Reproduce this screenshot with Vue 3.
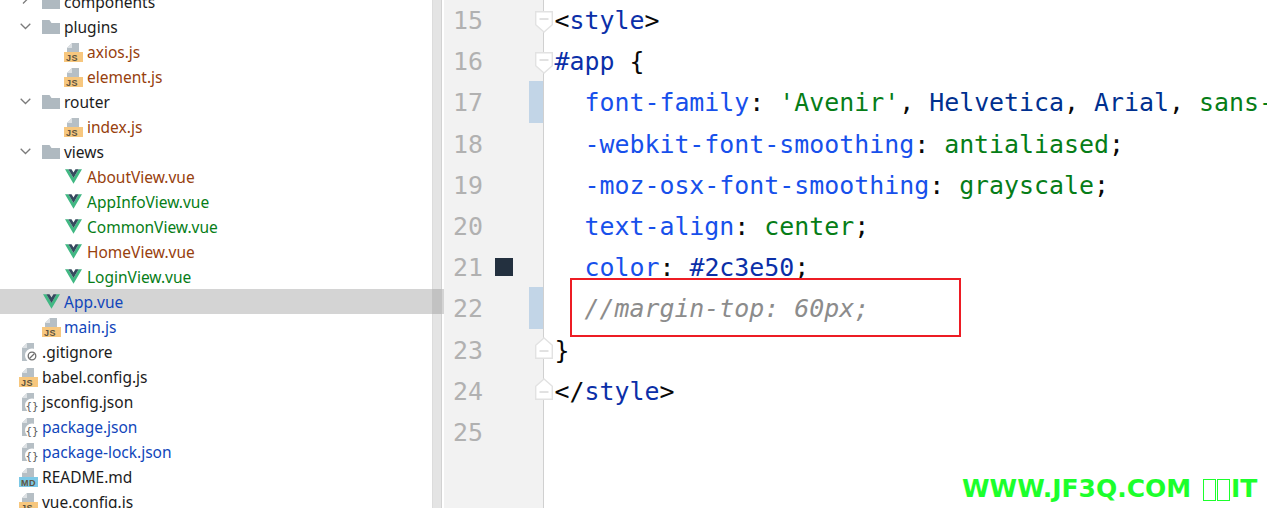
<script setup>
const rows = [
  { name: 'components', depth: 1, icon: 'folder', chevron: 'right', tone: 'plain' },
  { name: 'plugins', depth: 1, icon: 'folder', chevron: 'down', tone: 'plain' },
  { name: 'axios.js', depth: 2, icon: 'js', tone: 'brown' },
  { name: 'element.js', depth: 2, icon: 'js', tone: 'brown' },
  { name: 'router', depth: 1, icon: 'folder', chevron: 'down', tone: 'plain' },
  { name: 'index.js', depth: 2, icon: 'js', tone: 'brown' },
  { name: 'views', depth: 1, icon: 'folder', chevron: 'down', tone: 'plain' },
  { name: 'AboutView.vue', depth: 2, icon: 'vue', tone: 'brown' },
  { name: 'AppInfoView.vue', depth: 2, icon: 'vue', tone: 'green' },
  { name: 'CommonView.vue', depth: 2, icon: 'vue', tone: 'green' },
  { name: 'HomeView.vue', depth: 2, icon: 'vue', tone: 'brown' },
  { name: 'LoginView.vue', depth: 2, icon: 'vue', tone: 'green' },
  { name: 'App.vue', depth: 1, icon: 'vue', tone: 'blue', selected: true },
  { name: 'main.js', depth: 1, icon: 'js', tone: 'blue' },
  { name: '.gitignore', depth: 0, icon: 'ignore', tone: 'plain' },
  { name: 'babel.config.js', depth: 0, icon: 'js', tone: 'plain' },
  { name: 'jsconfig.json', depth: 0, icon: 'json', tone: 'plain' },
  { name: 'package.json', depth: 0, icon: 'json', tone: 'blue' },
  { name: 'package-lock.json', depth: 0, icon: 'json', tone: 'blue' },
  { name: 'README.md', depth: 0, icon: 'md', tone: 'plain' },
  { name: 'vue.config.js', depth: 0, icon: 'js', tone: 'plain' },
]

const lines = [
  { n: 15, fold: 'open', parts: [['p', '<'], ['t', 'style'], ['p', '>']] },
  { n: 16, fold: 'open', parts: [['t', '#app'], ['p', ' {']] },
  { n: 17, changed: true, parts: [['k', '  font-family'], ['p', ': '], ['v', "'Avenir'"], ['p', ', '], ['d', 'Helvetica'], ['p', ', '], ['d', 'Arial'], ['p', ', '], ['v', 'sans-serif'], ['p', ';']] },
  { n: 18, parts: [['k', '  -webkit-font-smoothing'], ['p', ': '], ['v', 'antialiased'], ['p', ';']] },
  { n: 19, parts: [['k', '  -moz-osx-font-smoothing'], ['p', ': '], ['v', 'grayscale'], ['p', ';']] },
  { n: 20, parts: [['k', '  text-align'], ['p', ': '], ['v', 'center'], ['p', ';']] },
  { n: 21, swatch: true, parts: [['k', '  color'], ['p', ': '], ['t', '#2c3e50'], ['p', ';']] },
  { n: 22, changed: true, parts: [['c', '  //margin-top: 60px;']] },
  { n: 23, fold: 'close', parts: [['p', '}']] },
  { n: 24, fold: 'close', parts: [['p', '</'], ['t', 'style'], ['p', '>']] },
  { n: 25, parts: [] },
]
</script>

<template>
  <div class="screen">
    <aside class="tree">
      <div class="tree-rows">
        <div
          v-for="row in rows"
          :key="row.name"
          class="row"
          :class="['depth-' + row.depth, { selected: row.selected }]"
        >
          <svg v-if="row.chevron === 'down'" class="chevron" viewBox="0 0 11 7">
            <path d="M.7.7 5.500 5.500 10.300.7" />
          </svg>
          <svg v-else-if="row.chevron === 'right'" class="chevron" viewBox="0 0 11 7">
            <path d="M3-1.500 6.500 2 3 5.500" />
          </svg>

          <span class="icon">
            <svg v-if="row.icon === 'folder'" width="18" height="14" viewBox="0 0 18 14">
              <path d="M0 0h7.500l2 3H18v11H0z" fill="#afb9c0" />
            </svg>
            <svg v-else-if="row.icon === 'vue'" class="vue" width="17" height="15" viewBox="0 0 256 221">
              <path d="M0 0l128 220.800L256 0h-51.200L128 132.480 50.560 0H0z" fill="#41b883" />
              <path d="M50.560 0L128 133.120 204.800 0h-47.360L128 51.200 97.920 0H50.560z" fill="#35495e" />
            </svg>
            <svg v-else-if="row.icon === 'js' || row.icon === 'md'" class="file" width="19" height="19" viewBox="0 0 19 19">
              <path d="M3 0h12v9H3z" fill="#b6bfc5" />
              <path d="M3 0v5l5-5z" fill="#fff" />
              <path d="M3 5 8 0v5z" fill="#dde1e4" />
              <rect y="9" width="19" height="10" :fill="row.icon === 'js' ? '#f7c77e' : '#7cc8e6'" />
              <text x="2" y="17.500" class="badge">{{ row.icon === 'js' ? 'JS' : 'MD' }}</text>
            </svg>
            <svg v-else class="file" width="19" height="19" viewBox="0 0 19 19">
              <path d="M3 0h12v18H3z" fill="#b6bfc5" />
              <path d="M3 0v5l5-5z" fill="#fff" />
              <path d="M3 5 8 0v5z" fill="#dde1e4" />
              <circle cx="13" cy="12.500" r="7" fill="#fff" />
              <template v-if="row.icon === 'ignore'">
                <circle cx="13" cy="13" r="3.800" fill="none" stroke="#6e6e6e" stroke-width="1.300" />
                <path d="M10.500 15.500l5-5" stroke="#6e6e6e" stroke-width="1.300" />
              </template>
              <text v-else x="13" y="16.500" class="braces">{}</text>
            </svg>
          </span>
          <span class="label" :class="row.tone">{{ row.name }}</span>
        </div>
      </div>
    </aside>

    <div class="scrollbar"><div class="thumb"></div></div>

    <main class="editor">
      <div class="editor-lines">
        <div v-for="line in lines" :key="line.n" class="line">
          <div class="gutter" :class="{ changed: line.changed }">
            <span class="number">{{ line.n }}</span>
            <span v-if="line.swatch" class="swatch"></span>
            <svg v-if="line.fold === 'open'" class="fold fold-open" width="18" height="22" viewBox="0 0 18 22">
              <path d="M.7.7h16.600v13L9 21 .7 13.700z" fill="#fff" stroke="#e2e2e2" stroke-width="1.400" />
              <path d="M4.500 8h9" stroke="#c4c4c4" />
            </svg>
            <svg v-else-if="line.fold === 'close'" class="fold fold-close" width="18" height="22" viewBox="0 0 18 22">
              <path d="M.7 21.300h16.600v-13L9 1 .7 8.300z" fill="#fff" stroke="#e2e2e2" stroke-width="1.400" />
              <path d="M4.500 14h9" stroke="#c4c4c4" />
            </svg>
          </div>
          <pre class="code"><span v-for="(part, i) in line.parts" :key="i" :class="'c-' + part[0]">{{ part[1] }}</span></pre>
        </div>
      </div>
      <div class="highlight"></div>
    </main>

    <div class="watermark">WWW.JF3Q.COM <i class="tofu first"></i><i class="tofu"></i>IT</div>
  </div>
</template>

<style>
html, body { margin: 0; background: #fff; }
</style>

<style scoped>
.screen {
  position: relative;
  display: flex;
  width: 1267px;
  height: 508px;
  overflow: hidden;
  background: #fff;
}

/* project tree */
.tree {
  flex: 0 0 444px;
  position: relative;
  z-index: 0;
}
.tree-rows { margin-top: -11px; }
.row {
  display: flex;
  align-items: center;
  height: 25px;
  font: 15.500px/25px "Noto Sans", sans-serif;
  white-space: nowrap;
}
.label { padding-top: 2px; }
.depth-0 { padding-left: 19px; }
.depth-1 { padding-left: 42px; }
.depth-2 { padding-left: 64px; }
.depth-1 .chevron { margin-left: -22px; margin-right: 11px; }
.depth-1 .icon { flex-basis: 22px; }
.selected { background: #d4d4d4; }

.chevron {
  flex: none;
  width: 11px;
  height: 7px;
  overflow: visible;
}
.chevron path { fill: none; stroke: #7b7b7b; stroke-width: 1.300; }
.icon {
  flex: 0 0 23px;
  display: flex;
  align-items: center;
}
.icon svg { display: block; }
.vue { margin-left: 1px; }
.file { margin-top: 2px; }
.badge { font: bold 9px "Liberation Sans", sans-serif; letter-spacing: .6px; fill: #5c5340; }
.braces { font: 11px "DejaVu Sans Mono", monospace; fill: #5d5d5d; text-anchor: middle; }

.plain { color: #1c1c1c; }
.brown { color: #97400d; }
.green { color: #067d17; }
.blue { color: #1146bb; }

/* scrollbar strip beside the tree */
.scrollbar {
  position: absolute;
  left: 432px;
  top: 0;
  bottom: 0;
  width: 10px;
  background: #e4e4e4;
  border-left: 1px solid #dcdcdc;
  border-right: 1px solid #d2d2d2;
  box-sizing: border-box;
}
.thumb {
  position: absolute;
  left: -1px;
  right: -1px;
  top: 289px;
  height: 25px;
  background: #c2c2c2;
}

/* editor */
.editor {
  position: relative;
  flex: 1;
  min-width: 0;
}
.editor-lines {
  display: flex;
  flex-direction: column;
  height: 509px;
  margin-top: -1px;
}
.line {
  display: flex;
  flex: 0 0 41.200px;
  min-height: 0;
}
.line:last-child { flex: 1; }
.gutter {
  position: relative;
  flex: 0 0 100px;
  box-sizing: border-box;
  background: #f2f2f2;
  border-right: 1px solid #d0d0d0;
  padding-left: 9px;
}
.changed::after {
  content: "";
  position: absolute;
  top: 0;
  bottom: 0;
  left: 85px;
  width: 14px;
  background: #c2d5e7;
}
.number {
  font: 24.900px/43.200px "DejaVu Sans Mono", monospace;
  color: #b1b1b1;
}
.swatch {
  position: absolute;
  left: 51px;
  top: 12px;
  width: 18px;
  height: 18px;
  background: #23303f;
}
.fold {
  position: absolute;
  left: 91px;
  z-index: 1;
}
.fold-open { top: 12px; }
.fold-close { top: 8px; }
.code {
  margin: 0 0 0 10.500px;
  font: 24.900px/43.200px "DejaVu Sans Mono", monospace;
  white-space: pre;
}
.c-p { color: #080808; }
.c-t { color: #0b2fa8; }
.c-k { color: #1750eb; }
.c-v { color: #067d17; }
.c-d { color: #00308f; }
.c-c { color: #8c8c8c; font-style: italic; }

.highlight {
  position: absolute;
  left: 126px;
  top: 278px;
  width: 391px;
  height: 59px;
  box-sizing: border-box;
  border: 2px solid #ed1c24;
}

/* watermark */
.watermark {
  position: absolute;
  left: 962px;
  top: 474px;
  font: bold 25px/30px "DejaVu Sans", sans-serif;
  color: #1cff2c;
  white-space: nowrap;
}
.tofu {
  display: inline-block;
  width: 13px;
  height: 22px;
  box-sizing: border-box;
  border: 1px solid #1cff2c;
  margin-right: 1px;
  vertical-align: -4px;
}
.tofu.first { margin-left: 3px; }
</style>
